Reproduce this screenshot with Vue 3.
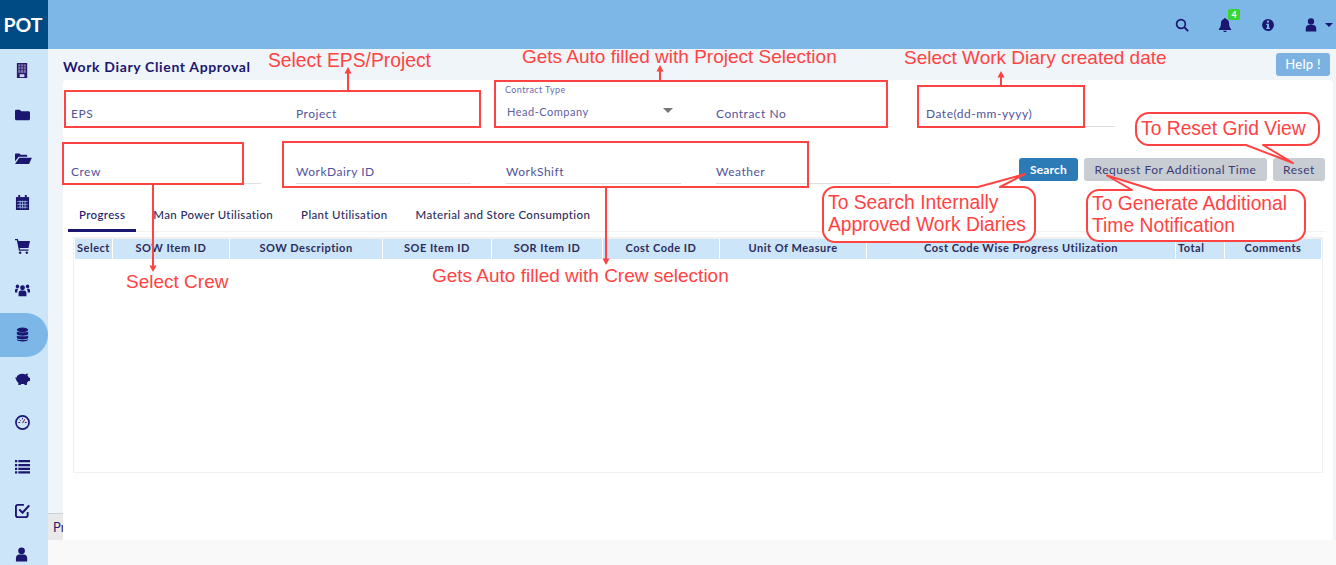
<script setup>
const tabs = ['Progress', 'Man Power Utilisation', 'Plant Utilisation', 'Material and Store Consumption']
const cols = [
  ['Select', 37], ['SOW Item ID', 116], ['SOW Description', 152], ['SOE Item ID', 108], ['SOR Item ID', 110],
  ['Cost Code ID', 116], ['Unit Of Measure', 146], ['Cost Code Wise Progress Utilization', 308], ['Total', 48], ['Comments', 96]
]
const sideIcons = ['building', 'folder', 'open', 'calendar', 'cart', 'users', 'db', 'piggy', 'gauge', 'list', 'check', 'user']
</script>

<template>
  <div class="app">
    <aside class="side">
      <div class="logo">POT</div>
      <div v-for="ic in sideIcons" :key="ic" class="nav" :class="{ active: ic === 'db' }">
        <svg class="ico" viewBox="0 0 16 16">
          <template v-if="ic === 'building'">
            <rect x="2" y="0" width="11" height="16" fill="#2b1a6e" />
            <rect x="3.500" y="1.500" width="8" height="9" fill="#7d7da8" />
            <path d="M3.500 4h8M3.500 7h8M6 1.500v9M9 1.500v9" stroke="#2b1a6e" stroke-width=".8" />
            <rect x="5" y="12" width="5" height="3" fill="#cfd6ee" />
          </template>
          <path v-else-if="ic === 'folder'" d="M0 4.500C0 3.600.6 3 1.500 3h3.600l1.600 1.600h7.800c.8 0 1.500.7 1.500 1.500v6.300c0 .9-.7 1.600-1.500 1.600h-13C.6 14 0 13.300 0 12.400z" fill="#1b1670" />
          <path v-else-if="ic === 'open'" d="M0 3.600C0 3 .5 2.600 1 2.600h3.600l1.400 1.300h6c.6 0 1 .4 1 1v1.300H4L0 11zM4.600 7.200H18l-3 6.600H0z" fill="#1b1670" />
          <template v-else-if="ic === 'calendar'">
            <path d="M1 2.200h14V16H1z" fill="#1b1670" />
            <path d="M3.500 0h2v3h-2zM10.500 0h2v3h-2z" fill="#1b1670" />
            <path d="M2.500 7h11M2.500 10h11M2.500 13h11M5.500 6v8.500M8 6v8.500M10.700 6v8.500" stroke="#a9c6ea" stroke-width=".8" />
          </template>
          <path v-else-if="ic === 'cart'" d="M0 0h3l.7 2H16l-1.600 7.500H5l.4 1.700h9v1.300H4.200L2 1.400H0z M5.500 13.200a1.400 1.400 0 1 1-.01 0zM12.600 13.200a1.400 1.400 0 1 1-.01 0z" fill="#1b1670" />
          <g v-else-if="ic === 'users'" fill="#1b1670">
            <circle cx="8" cy="5" r="2.600" /><circle cx="2.600" cy="3.600" r="1.900" /><circle cx="13.400" cy="3.600" r="1.900" />
            <path d="M3.800 14v-3.200C3.800 9 5 8 6 8h4c1 0 2.200 1 2.200 2.800V14zM0 10V7.600C0 6.600.6 6 1.500 6h2.200c-.6.6-1.200 1.400-1.200 3v1zM16 10V7.600c0-1-.6-1.600-1.500-1.600h-2.200c.6.6 1.200 1.400 1.200 3v1z" />
          </g>
          <g v-else-if="ic === 'db'" fill="#1b1670">
            <ellipse cx="8" cy="3" rx="6" ry="2.500" />
            <path d="M2 4.800c1.200 1.300 10.800 1.300 12 0v2.600c0 2.400-12 2.400-12 0zM2 9c1.200 1.300 10.800 1.300 12 0v2.400c0 2.400-12 2.400-12 0zM2 13c1.200 1.200 10.800 1.200 12 0v.4c0 2.800-12 2.800-12 0z" />
          </g>
          <path v-else-if="ic === 'piggy'" d="M0 6.800c.6 0 1 .3 1.300.7C2.200 4.400 5 3 8 3c1.200 0 2 .2 3 .6.8-.6 1.600-1 2.800-1l-.5 2.400c.8.7 1.300 1.300 1.500 2.100H16v3.600h-1.700c-.4.7-1 1.300-1.600 1.700V15h-2.600v-1.200H6.200V15H3.600v-2.400C2.200 11.500 1.200 10 1 8.200.5 8 0 7.600 0 6.800z" fill="#1b1670" />
          <g v-else-if="ic === 'gauge'">
            <circle cx="8" cy="8" r="7" fill="none" stroke="#1b1670" stroke-width="1.800" />
            <path d="M8 8.500 10.500 4.500" stroke="#b0274a" stroke-width="1.200" />
            <path d="M3.500 8h2M10.500 8h2M8 3v1.500M5 5l1 1" stroke="#1b1670" stroke-width="1" />
          </g>
          <path v-else-if="ic === 'list'" d="M0 1h2.400v2.400H0zM3.600 1H16v2.400H3.600zM0 5.200h2.400v2.400H0zM3.600 5.200H16v2.400H3.600zM0 9.400h2.400v2.400H0zM3.600 9.400H16v2.400H3.600zM0 13h2.400v2.400H0zM3.600 13H16v2.400H3.600z" fill="#1b1670" />
          <g v-else-if="ic === 'check'">
            <path d="M9.500 2H3C1.800 2 1 2.800 1 4v9c0 1.200.8 2 2 2h8.500c1.200 0 2-.8 2-2V9.500" fill="none" stroke="#1b1670" stroke-width="2" />
            <path d="M4.500 6.800 8 10.400 15.200 2.500" fill="none" stroke="#1b1670" stroke-width="2.200" />
          </g>
          <g v-else fill="#1b1670">
            <circle cx="7" cy="4" r="3.600" />
            <path d="M1 15.500v-3.600C1 9.800 2.600 8 4.400 8h5.200C11.400 8 13 9.800 13 11.900v3.600z" />
          </g>
        </svg>
      </div>
    </aside>

    <div class="main">
      <header class="top">
        <svg class="tico" viewBox="0 0 16 16"><circle cx="6.800" cy="6.800" r="5" fill="none" stroke="#1b1670" stroke-width="1.900" /><path d="m10.500 10.500 4.500 4.500" stroke="#1b1670" stroke-width="2.200" /></svg>
        <span class="bell">
          <svg class="tico" viewBox="0 0 16 16"><path d="M8 0c.7 0 1.100.5 1.100 1.200 2.200.5 3.500 2.200 3.500 4.600 0 4 1 5.400 2.400 6.800v1H1v-1c1.400-1.400 2.400-2.800 2.400-6.800 0-2.400 1.300-4.100 3.500-4.600C6.900.5 7.300 0 8 0zM6 14.600h4c0 1-.9 1.400-2 1.400s-2-.4-2-1.400z" fill="#1b1670" /></svg>
          <b class="badge">4</b>
        </span>
        <svg class="tico" viewBox="0 0 16 16"><circle cx="8" cy="8" r="6.800" fill="#1b1670" /><rect x="6.800" y="3" width="2.400" height="2.200" fill="#7cb7e8" /><path d="M5.900 6.500h3.300v4.600h1v1.400H5.900v-1.400h1V7.900h-1z" fill="#7cb7e8" /></svg>
        <span class="usr">
          <svg class="tico" viewBox="0 0 14 16"><circle cx="7" cy="4" r="3.600" fill="#1b1670" /><path d="M1 15.500v-3.600C1 9.800 2.600 8 4.400 8h5.200C11.400 8 13 9.800 13 11.900v3.600z" fill="#1b1670" /></svg>
          <i class="caret"></i>
        </span>
      </header>

      <div class="body">
        <div class="gutter"><div class="pr">Pr</div></div>
        <div class="content">
          <div class="titlebar">
            <h1>Work Diary Client Approval</h1>
            <button class="help">Help !</button>
          </div>
          <section class="card">
            <div class="row first">
              <div class="field w190"><span>EPS</span></div>
              <div class="field"><span>Project</span></div>
              <div class="field select">
                <small>Contract Type</small>
                <em>Head-Company</em>
                <i class="drop"></i>
              </div>
              <div class="field"><span>Contract No</span></div>
              <div class="field w189"><span>Date(dd-mm-yyyy)</span></div>
            </div>
            <div class="row second">
              <div class="field w190"><span>Crew</span></div>
              <div class="field"><span>WorkDairy ID</span></div>
              <div class="field"><span>WorkShift</span></div>
              <div class="field"><span>Weather</span></div>
              <div class="btns">
                <button class="btn primary">Search</button>
                <button class="btn wide">Request For Additional Time</button>
                <button class="btn narrow">Reset</button>
              </div>
            </div>
            <nav class="tabs">
              <a v-for="(t, i) in tabs" :key="t" :class="{ on: i === 0 }">{{ t }}</a>
            </nav>
            <div class="grid">
              <div class="thead">
                <div v-for="c in cols" :key="c[0]" class="th" :class="{ left: c[0] === 'Total' }" :style="{ width: c[1] + 'px' }">{{ c[0] }}</div>
              </div>
            </div>
          </section>
        </div>
      </div>
      <footer class="foot"></footer>
    </div>

    <svg class="notes" viewBox="0 0 1336 565" width="1336" height="565">
      <g fill="none" stroke="#ff4343" stroke-width="2">
        <rect x="65" y="91" width="415" height="36" />
        <rect x="495" y="81" width="392" height="46" />
        <rect x="918" y="86" width="166" height="41" />
        <rect x="63" y="143" width="180" height="41" />
        <rect x="283" y="142" width="525" height="45" />
        <path d="M348 90V72M660 80V70M1001 85V76M153 184V266M606 187V259" />
      </g>
      <path fill="#ff4343" d="M348 67l3.500 6.500h-7zM660 65l3.500 6.500h-7zM1001 71l3.500 6.500h-7zM153 272l3.500-6.500h-7zM606 265l3.500-6.500h-7z" />
      <g fill="#fff" stroke="#ff4343" stroke-width="2" stroke-linejoin="round">
        <path d="M1149 113H1306a13 13 0 0 1 13 13v6a13 13 0 0 1-13 13H1263L1293 163 1246 145H1149a13 13 0 0 1-13-13v-6a13 13 0 0 1 13-13z" />
        <path d="M835 187H978L1025 174 1000 187H1023a12 12 0 0 1 12 12v31a12 12 0 0 1-12 12H835a12 12 0 0 1-12-12v-31a12 12 0 0 1 12-12z" />
        <path d="M1099 190H1132L1107 175.500 1154 190H1293a12 12 0 0 1 12 12v27a12 12 0 0 1-12 12H1099a12 12 0 0 1-12-12v-27a12 12 0 0 1 12-12z" />
      </g>
      <g class="ntext" fill="#ff4343">
        <text class="eps" x="268" y="66.500">Select EPS/Project</text>
        <text x="522" y="62.500">Gets Auto filled with Project Selection</text>
        <text x="904" y="63.500">Select Work Diary created date</text>
        <text x="126" y="288">Select Crew</text>
        <text x="432" y="281.500">Gets Auto filled with Crew selection</text>
      </g>
      <g class="ntext call" fill="#ff4343">
        <text x="1141" y="135">To Reset Grid View</text>
        <text x="828" y="209">To Search Internally</text>
        <text x="828" y="231">Approved Work Diaries</text>
        <text x="1092" y="210">To Generate Additional</text>
        <text x="1092" y="232">Time Notification</text>
      </g>
    </svg>
  </div>
</template>

<style scoped>
.app { position: relative; display: flex; width: 1336px; height: 565px; overflow: hidden; font-family: Lato, "Liberation Sans", sans-serif; background: #f9f9f9; }
.side { width: 48px; flex: none; background: #cce5f8; }
.logo { height: 49px; background: #004b84; color: #fff; font-size: 19.500px; font-weight: 700; display: flex; align-items: center; justify-content: center; padding-right: 2px; box-sizing: border-box; }
.nav { height: 44px; display: flex; align-items: center; padding: 0 0 2px 15px; box-sizing: border-box; }
.nav.active { background: #7cb7e8; border-radius: 0 22px 22px 0; }
.ico { width: 15px; height: 15px; display: block; overflow: visible; }
.main { flex: 1; min-width: 0; display: flex; flex-direction: column; }
.top { height: 49px; background: #7cb7e8; display: flex; align-items: center; justify-content: flex-end; flex: none; padding-right: 3px; gap: 29px; }
.tico { width: 14px; height: 14px; display: block; }
.bell { position: relative; }
.badge { position: absolute; left: 10px; top: -9px; width: 12px; height: 11px; border-radius: 2px; background: #37d62c; color: #fff; font-size: 9px; line-height: 11px; text-align: center; }
.usr { display: flex; align-items: center; gap: 7px; }
.caret { width: 0; height: 0; border: 4px solid transparent; border-top: 4px solid #1b1670; border-bottom: 0; }
.body { display: flex; height: 491px; flex: none; background: #eff5f8; }
.gutter { width: 15px; flex: none; display: flex; flex-direction: column; justify-content: flex-end; overflow: hidden; }
.pr { height: 27px; background: #e9e9e9; border-top: 1px solid #cfd0d6; box-sizing: border-box; color: #2b1a6e; font-size: 13px; line-height: 27px; padding-left: 5px; }
.content { flex: 1; min-width: 0; padding-right: 3px; display: flex; flex-direction: column; }
.titlebar { height: 31px; flex: none; display: flex; justify-content: space-between; align-items: flex-start; padding-right: 3px; }
h1 { margin: 9px 0 0; font-size: 14px; font-weight: 700; letter-spacing: .65px; color: #1b1670; }
.help { margin-top: 4px; width: 54px; height: 23px; border: 0; border-radius: 3px; background: #7cb2e2; color: #fff; font: 500 13px/23px Lato, sans-serif; letter-spacing: .3px; padding: 0; }
.card { flex: 1; background: #fff; border-radius: 4px 4px 0 0; padding: 0 8px; box-sizing: border-box; min-height: 0; }
.row { display: flex; gap: 35px; }
.first { height: 47px; align-items: flex-end; }
.second { height: 57px; align-items: flex-end; }
.field { position: relative; width: 175px; height: 30px; border-bottom: 1px solid #dfdfdf; box-sizing: border-box; color: #53539a; font-size: 12px; letter-spacing: .5px; }
.field span { position: absolute; left: 0; bottom: 4px; line-height: 15px; }
.first .field span { bottom: 5px; }
.w190 { width: 190px; }
.w189 { width: 189px; }
.select small { position: absolute; left: -1px; top: -13px; font-size: 9px; letter-spacing: .4px; color: #6a6aa8; }
.select em { position: absolute; left: 1px; top: 8px; font-style: normal; font-size: 11px; letter-spacing: .5px; color: #6060a2; }
.drop { position: absolute; left: 157px; top: 11px; border: 5px solid transparent; border-top: 5px solid #777; border-bottom: 0; }
.btns { margin-left: auto; display: flex; gap: 6px; align-self: flex-end; margin-bottom: 3px; }
.btn { height: 23px; width: 59px; padding: 0; border: 0; border-radius: 3px; background: #c8ccd3; color: #3c3c74; font: 400 12px/23px Lato, sans-serif; letter-spacing: .5px; }
.btn.wide { width: 183px; }
.btn.narrow { width: 52px; }
.btn.primary { background: #2c7bb6; color: #fff; font-weight: 700; letter-spacing: .2px; }
.tabs { display: flex; gap: 6px; margin: 20px 0 0 -3px; height: 27px; border-bottom: 1px solid #f2f2f2; box-sizing: content-box; }
.tabs a { padding: 0 11px; font-size: 11.500px; line-height: 21px; letter-spacing: .36px; color: #2c2c5c; font-weight: 500; height: 27px; box-sizing: border-box; }
.tabs a.on { color: #1b1670; border-bottom: 3px solid #1b1670; height: 28px; }
.grid { margin: 5px 0 0 2px; width: 1250px; height: 236px; border: 1px solid #f0f0f0; border-top-width: 2px; box-sizing: border-box; padding: 0 1px; }
.thead { display: flex; gap: 1px; height: 20px; }
.th { flex: none; background: #cce5f8; color: #2c2c5c; font-size: 11px; font-weight: 700; letter-spacing: .5px; text-align: center; line-height: 18px; white-space: nowrap; overflow: hidden; }
.th.left { text-align: left; padding-left: 2px; box-sizing: border-box; }
.foot { flex: 1; background: #f9f9f9; }
.notes { position: absolute; left: 0; top: 0; pointer-events: none; }
.ntext { font-family: "Liberation Sans", Arial, sans-serif; font-size: 19px; }
.ntext.call, .eps { font-size: 19.300px; }
</style>
